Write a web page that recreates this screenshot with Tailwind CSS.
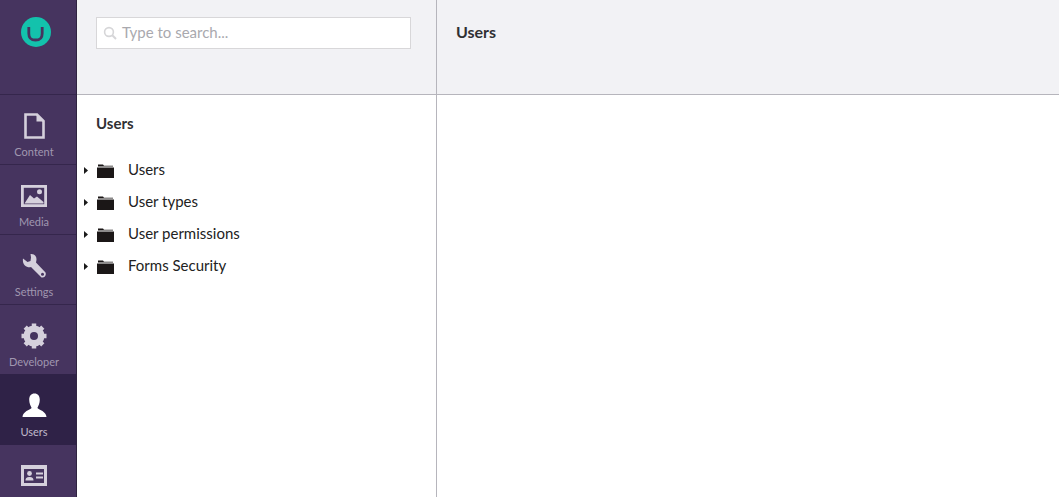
<!doctype html>
<html>
<head>
<meta charset="utf-8">
<script src="https://cdn.jsdelivr.net/npm/@tailwindcss/browser@4"></script>
</head>
<body class="m-0 overflow-hidden bg-white">
<div class="flex h-[497px] w-[1059px] overflow-hidden font-['Lato',sans-serif]">
  <!-- Sidebar -->
  <nav class="flex h-full w-[77px] shrink-0 flex-col overflow-hidden border-r border-r-[#2f2340] bg-[#46345f]">
    <div class="flex h-[95px] shrink-0 justify-center border-b border-b-[#35264c] pr-[4px] pt-[17px]">
      <svg class="h-[30px] w-[30px]" viewBox="0 0 30 30"><circle cx="15" cy="15" r="15" fill="#13c2ac"/><path d="M7.8 10 V16.5 C7.8 21.8 10.5 23 14.5 23 C18.5 23 21.2 21.8 21.2 16.5 V10" fill="none" stroke="#46345f" stroke-width="2.8"/></svg>
    </div>
    <a class="flex h-[70px] shrink-0 flex-col items-center border-b border-b-[#35264c] pr-[8px] pt-[18px] text-[11px] leading-[14px] text-[#a097b0]">
      <svg class="h-[26px] w-[22px]" viewBox="0 0 22 26"><path d="M2.5 1.5 H14 L20.5 8 V24.5 H2.5 Z" fill="none" stroke="#d5d0dc" stroke-width="2.6"/><path d="M13.5 1.5 V8.5 H20.5 Z" fill="#d5d0dc"/></svg>
      <span class="mt-[6px]">Content</span>
    </a>
    <a class="flex h-[70px] shrink-0 flex-col items-center border-b border-b-[#35264c] pr-[8px] pt-[20px] text-[11px] leading-[14px] text-[#a097b0]">
      <svg class="h-[22px] w-[26px]" viewBox="0 0 26 22"><rect x="1.4" y="1.4" width="23.2" height="19.2" fill="none" stroke="#d5d0dc" stroke-width="2.8"/><path d="M3.5 18.5 L9 10 L13 13.5 L16 11.5 L22.5 17 V18.5 Z" fill="#d5d0dc"/><circle cx="18.5" cy="6.8" r="2.5" fill="#d5d0dc"/></svg>
      <span class="mt-[8px]">Media</span>
    </a>
    <a class="flex h-[70px] shrink-0 flex-col items-center border-b border-b-[#35264c] pr-[8px] pt-[18px] text-[11px] leading-[14px] text-[#a097b0]">
      <svg class="h-[25px] w-[26px]" viewBox="0 0 26 25"><path d="M2 5.5 L6.5 9 L9.5 8 L10 4.5 L9.5 1 C13 0.5 15.5 3 15.5 6 C15.5 7.5 15.2 8.5 15 9.5 L24.5 19.5 C25.5 22 24 25 20.5 24.5 L10 14 C6 15 1 12 2 5.5 Z" fill="#d5d0dc"/><circle cx="21.5" cy="21.3" r="1.5" fill="#46345f"/></svg>
      <span class="mt-[7px]">Settings</span>
    </a>
    <a class="flex h-[69px] shrink-0 flex-col items-center pr-[8px] pt-[18px] text-[11px] leading-[14px] text-[#a097b0]">
      <svg class="h-[26px] w-[26px]" viewBox="0 0 26 26"><circle cx="13" cy="13" r="7.5" fill="none" stroke="#d5d0dc" stroke-width="6"/><path d="M13 13 L13 0.5 M13 13 L13 25.5 M13 13 L0.5 13 M13 13 L25.5 13 M13 13 L4.2 4.2 M13 13 L21.8 21.8 M13 13 L21.8 4.2 M13 13 L4.2 21.8" stroke="#d5d0dc" stroke-width="4.5"/><circle cx="13" cy="13" r="4" fill="#46345f"/></svg>
      <span class="mt-[6px]">Developer</span>
    </a>
    <a class="flex h-[71px] shrink-0 flex-col items-center bg-[#2f2247] pr-[8px] pt-[19px] text-[11px] leading-[14px] text-[#c0bacb]">
      <svg class="h-[25px] w-[25px]" viewBox="0 0 26 25"><path d="M13 0 C16.5 0 18.5 2.5 18.5 6.5 C18.5 10 17 13 16 15 C18 17.5 25 18 25.5 24.5 H0.5 C1 18 8 17.5 10 15 C9 13 7.5 10 7.5 6.5 C7.5 2.5 9.5 0 13 0 Z" fill="#fff"/></svg>
      <span class="mt-[7px]">Users</span>
    </a>
    <a class="flex shrink-0 flex-col items-center pr-[8px] pt-[20px]">
      <svg class="h-[21px] w-[26px]" viewBox="0 0 26 21"><path d="M0 0 H26 V21 H0 Z M3 4 V18 H23 V4 Z" fill="#d5d0dc" fill-rule="evenodd"/><circle cx="8.5" cy="8.5" r="2.4" fill="#d5d0dc"/><path d="M4.5 15.5 C4.5 12.5 6.5 12 8.5 12 C10.5 12 12.5 12.5 12.5 15.5 Z" fill="#d5d0dc"/><path d="M15 8.5 H22 M15 12.5 H22" stroke="#d5d0dc" stroke-width="2"/></svg>
    </a>
  </nav>

  <!-- Tree column -->
  <section class="flex h-full w-[360px] shrink-0 flex-col border-r border-r-[#b6b5bc]">
    <div class="flex h-[95px] shrink-0 items-start border-b border-b-[#b6b5bc] bg-[#f2f2f5] pl-[19px] pt-[17px]">
      <div class="flex h-[32px] w-[315px] items-center border border-[#d8d7d9] bg-white pl-[6px]">
        <svg class="h-[14px] w-[14px]" viewBox="0 0 14 14"><circle cx="6" cy="6" r="4.4" fill="none" stroke="#d6d6d8" stroke-width="1.6"/><path d="M9.3 9.3 L13 13" stroke="#d6d6d8" stroke-width="2"/></svg>
        <span class="mb-[2px] ml-[5px] text-[15px] text-[#a9a9ae]">Type to search...</span>
      </div>
    </div>
    <div class="pl-[19px] pt-[19px] text-[15px] font-bold leading-[18px] text-[#303033]">Users</div>
    <ul class="mt-[21px] flex flex-col text-[15px] text-[#222]">
      <li class="flex h-[32px] items-center">
        <svg class="ml-[7px] mt-[2px] h-[7px] w-[4px]" viewBox="0 0 4 7"><path d="M0 0 L4 3.5 L0 7 Z" fill="#1b1b1b"/></svg>
        <svg class="ml-[9px] mt-[4px] h-[14px] w-[17px]" viewBox="0 0 17 14"><path d="M1 0.6 H6 L7 1.8 H16 V2.6 H1 Z M0 3.6 H17 V14 H0 Z" fill="#1b1717"/></svg>
        <span class="ml-[14px]">Users</span>
      </li>
      <li class="flex h-[32px] items-center">
        <svg class="ml-[7px] mt-[2px] h-[7px] w-[4px]" viewBox="0 0 4 7"><path d="M0 0 L4 3.5 L0 7 Z" fill="#1b1b1b"/></svg>
        <svg class="ml-[9px] mt-[4px] h-[14px] w-[17px]" viewBox="0 0 17 14"><path d="M1 0.6 H6 L7 1.8 H16 V2.6 H1 Z M0 3.6 H17 V14 H0 Z" fill="#1b1717"/></svg>
        <span class="ml-[14px]">User types</span>
      </li>
      <li class="flex h-[32px] items-center">
        <svg class="ml-[7px] mt-[2px] h-[7px] w-[4px]" viewBox="0 0 4 7"><path d="M0 0 L4 3.5 L0 7 Z" fill="#1b1b1b"/></svg>
        <svg class="ml-[9px] mt-[4px] h-[14px] w-[17px]" viewBox="0 0 17 14"><path d="M1 0.6 H6 L7 1.8 H16 V2.6 H1 Z M0 3.6 H17 V14 H0 Z" fill="#1b1717"/></svg>
        <span class="ml-[14px]">User permissions</span>
      </li>
      <li class="flex h-[32px] items-center">
        <svg class="ml-[7px] mt-[2px] h-[7px] w-[4px]" viewBox="0 0 4 7"><path d="M0 0 L4 3.5 L0 7 Z" fill="#1b1b1b"/></svg>
        <svg class="ml-[9px] mt-[4px] h-[14px] w-[17px]" viewBox="0 0 17 14"><path d="M1 0.6 H6 L7 1.8 H16 V2.6 H1 Z M0 3.6 H17 V14 H0 Z" fill="#1b1717"/></svg>
        <span class="ml-[14px]">Forms Security</span>
      </li>
    </ul>
  </section>

  <!-- Main -->
  <main class="flex h-full min-w-0 flex-1 flex-col">
    <div class="h-[95px] shrink-0 border-b border-b-[#b6b5bc] bg-[#f2f2f5] pl-[19px] pt-[23px] text-[16px] font-bold leading-[18px] text-[#303033]">Users</div>
    <div class="flex-1 bg-white"></div>
  </main>
</div>
</body>
</html>
